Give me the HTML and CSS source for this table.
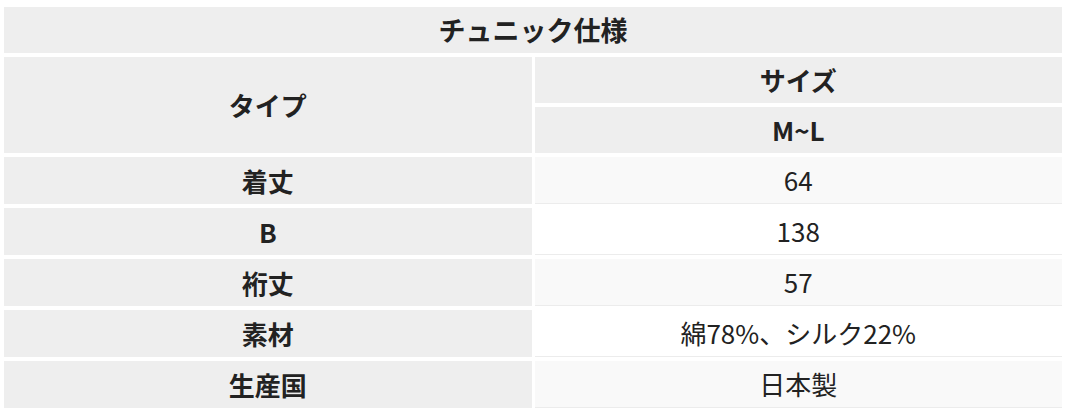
FILE: index.html
```html
<!DOCTYPE html>
<html lang="ja">
<head>
<meta charset="utf-8">
<link rel="stylesheet" href="styles.css">
</head>
<body>
<div class="wrap">
<table class="spec">
  <thead>
    <tr><th colspan="2" class="title">チュニック仕様</th></tr>
  </thead>
  <tbody>
    <tr><th rowspan="2">タイプ</th><th>サイズ</th></tr>
    <tr><th>M~L</th></tr>
    <tr class="odd"><th>着丈</th><td>64</td></tr>
    <tr class="even"><th>B</th><td>138</td></tr>
    <tr class="odd"><th>裄丈</th><td>57</td></tr>
    <tr class="even"><th>素材</th><td>綿78%、シルク22%</td></tr>
    <tr class="odd"><th>生産国</th><td>日本製</td></tr>
  </tbody>
</table>
</div>
</body>
</html>
```
FILE: styles.css
```css
html, body {
  margin: 0;
  padding: 0;
  background: #fff;
}
.wrap {
  padding: 3px 0 0 1px;
}
.spec {
  width: 100%;
  border-collapse: separate;
  border-spacing: 3px 4px;
  font-family: "Noto Sans CJK JP", "Open Sans", sans-serif;
  font-size: 26px;
  line-height: 36px;
  color: #222;
  table-layout: fixed;
}
.spec th,
.spec td {
  padding: 5px 8px;
  text-align: center;
  vertical-align: middle;
  width: 50%;
}
.spec th {
  background: #eeeeee;
  font-weight: 700;
}
.spec .title {
  font-size: 27px;
}
.spec td {
  font-weight: 400;
  border-bottom: 1px solid #ececec;
}
.spec .odd td {
  background: #f9f9f9;
}
.spec .even td {
  background: #fff;
}
```
